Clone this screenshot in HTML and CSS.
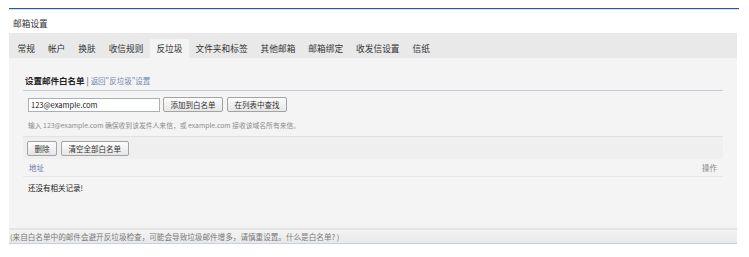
FILE: index.html
```html
<!DOCTYPE html>
<html lang="zh-CN">
<head>
<meta charset="utf-8">
<title>邮箱设置</title>
<link rel="stylesheet" href="styles.css">
</head>
<body>
<div class="page">
  <div class="topline"></div>
  <div class="title">邮箱设置</div>
  <div class="tabs">
    <span class="tab">常规</span>
    <span class="tab">帐户</span>
    <span class="tab">换肤</span>
    <span class="tab">收信规则</span>
    <span class="tab active">反垃圾</span>
    <span class="tab">文件夹和标签</span>
    <span class="tab">其他邮箱</span>
    <span class="tab">邮箱绑定</span>
    <span class="tab">收发信设置</span>
    <span class="tab">信纸</span>
  </div>
  <div class="panel">
    <div class="heading"><b class="heading-main">设置邮件白名单</b> <span class="sep">|</span> <a class="back" href="#">返回"反垃圾"设置</a></div>
    <div class="addrow">
      <input class="addr-input" type="text" value="123@example.com">
      <button class="btn">添加到白名单</button>
      <button class="btn btn-find">在列表中查找</button>
    </div>
    <div class="hint">输入 123@example.com 确保收到该发件人来信，或 example.com 接收该域名所有来信。</div>
    <div class="toolbar">
      <button class="btn btn-del">删除</button>
      <button class="btn">清空全部白名单</button>
    </div>
    <div class="thead"><span class="col-addr">地址</span><span class="col-op">操作</span></div>
    <div class="empty">还没有相关记录!</div>
  </div>
  <div class="footer">(来自白名单中的邮件会避开反垃圾检查，可能会导致垃圾邮件增多，请慎重设置。什么是白名单? )</div>
</div>
</body>
</html>
```

FILE: styles.css
```css
* { box-sizing: border-box; }
html, body { margin: 0; padding: 0; background: #fff; }
body {
  padding-top: 8px;
  font-family: "Noto Sans CJK SC", "Liberation Sans", sans-serif;
  font-size: 7.5px;
  color: #333;
}
.page {
  margin-left: 9px;
  width: 728px;
}
.topline {
  height: 2px;
  border-top: 1px solid #2a5a93;
  border-bottom: 1px solid #d6e0ec;
  width: 730px;
}
.title {
  height: 23px;
  padding: 5px 0 0 4px;
  line-height: 18px;
  font-size: 8.7px;
  color: #333;
}
.tabs {
  display: flex;
  align-items: flex-end;
  height: 25px;
  background: #e9e9e9;
  padding-left: 2px;
  font-size: 8.7px;
}
.tab {
  height: 19px;
  line-height: 19px;
  padding: 0 6.5px;
  color: #333;
  white-space: nowrap;
}
.tab.active { background: #f4f4f4; }
.panel {
  background: #f4f4f4;
  height: 170px;
  padding: 0 14px;
}
.heading {
  padding: 14px 0 1px 2px;
  line-height: 16px;
  border-bottom: 1px solid #c9cdd9;
  color: #222;
  font-size: 8.5px;
}
.heading-main { font-weight: bold; color: #222; }
.sep { color: #444; }
.back { color: #7484ad; text-decoration: none; font-size: 7.5px; }
.addrow {
  display: flex;
  align-items: center;
  margin-top: 6px;
  padding-left: 5px;
  height: 15px;
}
.addr-input {
  width: 132px;
  height: 14px;
  border: 1px solid #aab0b8;
  background: #fff;
  padding: 0 2px;
  font: inherit;
  color: #222;
  margin: 0 3px 0 0;
  outline: none;
}
.btn {
  height: 15px;
  min-width: 30px;
  padding: 0 6.5px;
  margin: 0;
  border: 1px solid #a3a3a3;
  border-radius: 2px;
  background: linear-gradient(#fdfdfd, #e6e6e6);
  font: inherit;
  color: #333;
  line-height: 13px;
  white-space: nowrap;
}
.btn-find { margin-left: 4px; }
.hint {
  padding-left: 5px;
  margin-top: 7px;
  line-height: 12px;
  height: 17px;
  color: #8c8c8c;
  font-size: 6.8px;
}
.toolbar {
  display: flex;
  align-items: flex-start;
  gap: 4px;
  height: 23px;
  border-top: 1px solid #e2e2e2;
  background: #efefef;
  padding: 4px 0 0 4px;
}
.thead {
  display: flex;
  justify-content: space-between;
  height: 18px;
  line-height: 18px;
  padding: 0 6px 0 6px;
  border-bottom: 1px solid #e7e7e7;
}
.col-addr { color: #6b7ba8; }
.col-op { color: #888; }
.empty {
  padding: 3px 0 0 5px;
  line-height: 16px;
  color: #222;
}
.footer {
  height: 16px;
  border-top: 2px solid #e4e4e4;
  border-bottom: 1px solid #c7d2e0;
  background: linear-gradient(#f3f3f3, #e9e9e9);
  padding-left: 1px;
  line-height: 13px;
  color: #7a7a7a;
  font-size: 7.6px;
  white-space: nowrap;
}
```
